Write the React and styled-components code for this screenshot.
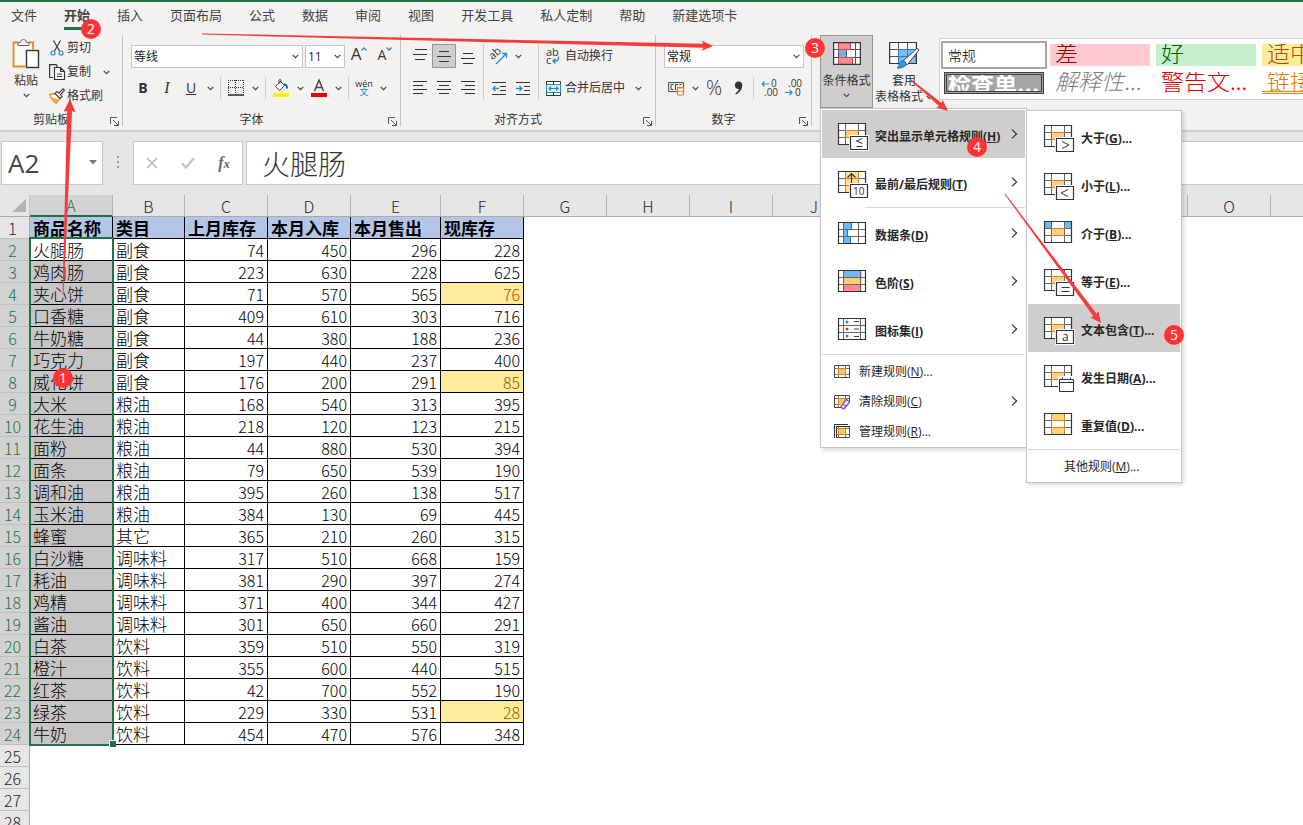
import React, { useState } from "react"
import styled, { createGlobalStyle, css } from "styled-components"

const tabs = ["文件", "开始", "插入", "页面布局", "公式", "数据", "审阅", "视图", "开发工具", "私人定制", "帮助", "新建选项卡"]

const columns = [
  { name: "A", width: 83 },
  { name: "B", width: 72 },
  { name: "C", width: 83 },
  { name: "D", width: 83 },
  { name: "E", width: 90 },
  { name: "F", width: 83 },
  { name: "G", width: 83 },
  { name: "H", width: 83 },
  { name: "I", width: 83 },
  { name: "J", width: 83 },
  { name: "K", width: 83 },
  { name: "L", width: 83 },
  { name: "M", width: 83 },
  { name: "N", width: 83 },
  { name: "O", width: 83 },
  { name: "P", width: 83 },
]

const heads = ["商品名称", "类目", "上月库存", "本月入库", "本月售出", "现库存"]

const stock = [
  ["火腿肠", "副食", 74, 450, 296, 228],
  ["鸡肉肠", "副食", 223, 630, 228, 625],
  ["夹心饼", "副食", 71, 570, 565, 76],
  ["口香糖", "副食", 409, 610, 303, 716],
  ["牛奶糖", "副食", 44, 380, 188, 236],
  ["巧克力", "副食", 197, 440, 237, 400],
  ["威化饼", "副食", 176, 200, 291, 85],
  ["大米", "粮油", 168, 540, 313, 395],
  ["花生油", "粮油", 218, 120, 123, 215],
  ["面粉", "粮油", 44, 880, 530, 394],
  ["面条", "粮油", 79, 650, 539, 190],
  ["调和油", "粮油", 395, 260, 138, 517],
  ["玉米油", "粮油", 384, 130, 69, 445],
  ["蜂蜜", "其它", 365, 210, 260, 315],
  ["白沙糖", "调味料", 317, 510, 668, 159],
  ["耗油", "调味料", 381, 290, 397, 274],
  ["鸡精", "调味料", 371, 400, 344, 427],
  ["酱油", "调味料", 301, 650, 660, 291],
  ["白茶", "饮料", 359, 510, 550, 319],
  ["橙汁", "饮料", 355, 600, 440, 515],
  ["红茶", "饮料", 42, 700, 552, 190],
  ["绿茶", "饮料", 229, 330, 531, 28],
  ["牛奶", "饮料", 454, 470, 576, 348],
]

const emptyRows = [25, 26, 27, 28]
const ROW = 22
const GUTTER = 30

const styleCells = [
  { text: "常规", kind: "normal" },
  { text: "差", kind: "bad" },
  { text: "好", kind: "good" },
  { text: "适中", kind: "neutral" },
  { text: "检查单...", kind: "check" },
  { text: "解释性...", kind: "explain" },
  { text: "警告文...", kind: "warn" },
  { text: "链接单...", kind: "link" },
]

/* ---------- icons ---------- */

const Chevron = () => (
  <svg width="7" height="5" viewBox="0 0 7 5" fill="none" stroke="#444" strokeWidth="1.2">
    <path d="M0.7 0.8 3.5 3.6 6.3 0.8" />
  </svg>
)

const ChevronRight = () => (
  <svg width="7" height="10" viewBox="0 0 7 10" fill="none" stroke="#333" strokeWidth="1.2">
    <path d="M1 0.6 5.6 5 1 9.4" />
  </svg>
)

const PasteIcon = () => (
  <svg width="28" height="30" viewBox="0 0 28 30" fill="none">
    <path d="M6 3.500H1.500v24H13V11h8V3.500h-3" fill="#FBFAF8" />
    <path d="M6 3.500H1.500v24H13M17 3.500h4v7" stroke="#E98B1B" strokeWidth="1.800" />
    <path d="M6 6.500V3.500h2.500a3 3 0 0 1 6 0H17v3z" fill="#fff" stroke="#666" />
    <rect x="14.500" y="11.500" width="12" height="17" fill="#fff" stroke="#333" strokeWidth="1.400" />
  </svg>
)

const CutIcon = () => (
  <svg width="14" height="16" viewBox="0 0 14 16" fill="none">
    <path d="M3.500 0.500 9.500 11M10.500 0.500 4.500 11" stroke="#444" strokeWidth="1.300" />
    <circle cx="3" cy="13" r="2" stroke="#2B88C8" strokeWidth="1.200" />
    <circle cx="11" cy="13" r="2" stroke="#2B88C8" strokeWidth="1.200" />
  </svg>
)

const CopyIcon = () => (
  <svg width="16" height="16" viewBox="0 0 16 16" fill="none" stroke="#333" strokeWidth="1.200">
    <path d="M4 13.500H0.600V0.600H7l1 1V3" />
    <path d="M5.500 3.500h6l4 4v8h-10zM11.500 3.500v4h4M8 10h5M8 12.500h5" fill="#fff" />
  </svg>
)

const BrushIcon = () => (
  <svg width="16" height="16" viewBox="0 0 16 16" fill="none">
    <path d="M0.800 6.500 6 5.500 11 10.500 7.500 15.200Q3 13 0.800 6.500z" fill="#fff" stroke="#E98B1B" strokeWidth="1.300" />
    <path d="M3 9 10 12 7 15.500Q4 13 3 9z" fill="#F2A94E" />
    <path d="M6 5.500 8 3.500l2 1.500L14 0.800l1.400 1.400L11.500 6.500l1.500 2-2 2z" fill="#fff" stroke="#444" strokeWidth="1.200" />
  </svg>
)

const LauncherIcon = () => (
  <svg width="9" height="9" viewBox="0 0 9 9" fill="none" stroke="#555">
    <path d="M0.500 7V0.500H7M3 3l5 5M8.500 4v4.500H4" />
  </svg>
)

const SizeMark = ({ down }) => (
  <svg width="6" height="4" viewBox="0 0 6 4" fill="none" stroke="#2B88C8" strokeWidth="1.300">
    <path d={down ? "M0.500 0.500 3 3 5.500 0.500" : "M0.500 3.500 3 1 5.500 3.500"} />
  </svg>
)

const BordersIcon = () => (
  <svg width="16" height="16" viewBox="0 0 16 16" fill="none" stroke="#333">
    <path d="M0.500 0v14M15.500 0v14M0 0.500h16M7.500 0v14M0 7.500h16" strokeDasharray="1 1" />
    <path d="M0 15h16" strokeWidth="1.600" />
  </svg>
)

const FillIcon = () => (
  <svg width="16" height="18" viewBox="0 0 16 18" fill="none">
    <path d="M7.500 2 2.500 7.500 6.500 11.500 11.500 6.500 7 2M6 5V1.500Q6 0.500 7 0.500T8 1.500V4" fill="#fff" stroke="#444" />
    <path d="M11 5.500Q14 5 14 9.500" stroke="#1C5BA8" strokeWidth="2" />
    <path d="M0 14h16v4H0z" fill="#FFF200" />
  </svg>
)

const FontColorIcon = () => (
  <svg width="16" height="18" viewBox="0 0 16 18" fill="none">
    <path d="M3.500 12 8 1l4.500 11M5 8.500h6" stroke="#444" strokeWidth="1.400" />
    <path d="M0 14h16v4H0z" fill="#E3000F" />
  </svg>
)

const lineSets = {
  top: ["M2 1.500h12", "M0 6.500h14", "M2 11.500h10"],
  middle: ["M2 3.500h10", "M0 8.500h14", "M2 13.500h10"],
  bottom: ["M2 5.500h10", "M0 10.500h14", "M2 15.500h10"],
  left: ["M0 1.500h14", "M0 5.500h10", "M0 9.500h14", "M0 13.500h10"],
  center: ["M0 1.500h14", "M2 5.500h10", "M0 9.500h14", "M2 13.500h10"],
  right: ["M0 1.500h14", "M4 5.500h10", "M0 9.500h14", "M4 13.500h10"],
}

const LinesIcon = ({ kind }) => (
  <svg width="14" height="16" viewBox="0 0 14 16" stroke="#333" strokeWidth="1.200">
    <path d={lineSets[kind].join("")} />
  </svg>
)

const IndentIcon = ({ out }) => (
  <svg width="14" height="14" viewBox="0 0 14 14" fill="none">
    <path d="M0 1.500h14M8 5.500h6M8 9.500h6M0 13.500h14" stroke="#333" strokeWidth="1.200" />
    <path d={out ? "M7 7.500H1M3.500 5 1 7.500l2.500 2.500" : "M0 7.500h6M3.500 5 6 7.500 3.500 10"} stroke="#2B88D8" strokeWidth="1.300" />
  </svg>
)

const OrientationIcon = () => (
  <svg width="17" height="17" viewBox="0 0 17 17" fill="none">
    <text x="1" y="11" fontSize="11" fill="#333" transform="rotate(-42 3 11)">ab</text>
    <path d="M5 16 15 6M11 5.500h4.500V10" stroke="#2B88C8" strokeWidth="1.300" />
  </svg>
)

const WrapIcon = () => (
  <svg width="15" height="17" viewBox="0 0 15 17" fill="none">
    <text x="0" y="8" fontSize="11" fill="#333">ab</text>
    <text x="0" y="16" fontSize="11" fill="#333">c</text>
    <path d="M12.500 8.500v1.500Q12.500 13 9.500 13H7M9.500 10.500 7 13l2.500 2.500" stroke="#2B88C8" strokeWidth="1.300" />
  </svg>
)

const MergeIcon = () => (
  <svg width="15" height="15" viewBox="0 0 15 15" fill="none" stroke="#333">
    <path d="M0.500 0.500h14v14H0.500zM7.500 0.500V4M7.500 11v3.500" fill="#fff" />
    <path d="M0.500 3.500h14v8H0.500z" fill="#E3F1FB" stroke="#2B88C8" />
    <path d="M3 7.500h9M5 5.500l-2 2 2 2M10 5.500l2 2-2 2" stroke="#2B88C8" strokeWidth="1.200" />
  </svg>
)

const CurrencyIcon = () => (
  <svg width="17" height="15" viewBox="0 0 17 15" fill="none">
    <path d="M0.600 1.600h15v9H0.600z" stroke="#444" />
    <path d="M5.500 3.500H3v5h2.500M7.500 9V3.500h2.500M11.500 3.500h2" stroke="#444" />
    <path d="M9.500 6.500h6v7q-3 1.500-6 0z" fill="#fff" stroke="#E9801B" strokeWidth="1.200" />
    <path d="M9.500 6.500q3 1.500 6 0M9.500 10q3 1.500 6 0" stroke="#E9801B" />
  </svg>
)

const DecimalIcon = ({ more }) => (
  <svg width="16" height="17" viewBox="0 0 16 17" fill="none">
    <text x={more ? 10 : 3} y="7" fontSize="10" fill="#333">{more ? "0" : ".00"}</text>
    <text x={more ? 3 : 10} y="16" fontSize="10" fill="#333">{more ? ".00" : "0"}</text>
    <path d={more ? "M8 4H1M3.500 1.500 1 4l2.500 2.500" : "M0 12.500h7M4.500 10 7 12.500 4.500 15"} stroke="#2B88C8" strokeWidth="1.200" />
  </svg>
)

const CommaIcon = () => (
  <svg width="9" height="14" viewBox="0 0 9 14" fill="#333">
    <path d="M4.300 0.500a3.600 3.600 0 0 1 4 3.800Q8.300 10 2 13.500L1.300 12.500Q4.500 10.500 5 8A3.700 3.700 0 1 1 4.300 0.500z" />
  </svg>
)

const CondIcon = () => (
  <svg width="28" height="23" viewBox="0 0 28 23" fill="none">
    <path d="M0.500 0.500h27v22H0.500z" fill="#fff" />
    <path d="M5 8h8v7H5z" fill="#6FB3F0" />
    <path d="M0 7.500h28M0 15.500h28M5.500 0v22M13.500 0v22M22.500 0v22" stroke="#555" />
    <path d="M5.500 0.500h12v7h-12zM5.500 15.500h14v7h-14z" fill="#FF8C8C" stroke="#E0494D" />
    <path d="M0.600 0.600h26.800v21.800H0.600z" stroke="#333" strokeWidth="1.200" />
  </svg>
)

const TableFormatIcon = () => (
  <svg width="31" height="28" viewBox="0 0 31 28" fill="none">
    <path d="M0.500 1.500h27v21H0.500z" fill="#fff" />
    <path d="M9 8.500h18.500v14H9z" fill="#7DBBEF" />
    <path d="M0 8.500h28M0 15.500h28M9.500 1v22M18.500 1v22" stroke="#555" />
    <path d="M9.500 8.500h18M9.500 15.500h18M9.500 8v14M18.500 8v14" stroke="#2B7CC0" />
    <path d="M0.600 1.500h26.800v21H0.600z" stroke="#333" strokeWidth="1.200" />
    <path d="M14 20 27.500 8q2-1 2.500 1L18 24z" fill="#fff" stroke="#444" />
    <path d="M13 19.500q4 0 4.500 4-3 4-9.500 3.500 3-1.500 2-4z" fill="#3A96DD" stroke="#1C6FB0" />
  </svg>
)

const marks = {
  le: <path d="M24.500 15.500 18.500 18l6 2.500M18.500 23.500h6" />,
  gt: <path d="M18 16.500l7 3.500-7 3.500" />,
  lt: <path d="M24 16.500l-7 3.500 7 3.500" />,
  eq: <path d="M17.500 18.500h8M17.500 22.500h8" />,
}

/* worksheet grid with a coloured part and a small tile in the corner */
const RuleIcon = ({ kind }) => {
  const tile = ["le", "gt", "lt", "eq", "ten", "a"].includes(kind)
  const plain = !["scale", "icons", "bars"].includes(kind)
  return (
    <svg width="30" height="22" viewBox="0 0 30 22" fill="none">
      <path d="M0.500 0.500h27v21H0.500z" fill="#fff" />
      {plain && kind !== "dup" && <path d="M7.500 7.500h13v7h-13z" fill="#FFD27F" />}
      {kind === "ten" && <path d="M7.500 0.500h13v21h-13z" fill="#FFDE9E" />}
      {kind === "dup" && <path d="M7.500 0.500h13v7h-13zM7.500 14.500h13v7h-13z" fill="#FFD27F" />}
      {kind === "between" && <path d="M0.500 0.500h7v7h-7zM20.500 0.500h7v7h-7z" fill="#6DB9F2" />}
      {kind === "scale" && (
        <>
          <path d="M5.500 0.500h18v7h-18z" fill="#78B7EE" />
          <path d="M5.500 7.500h18v7h-18z" fill="#FFCF70" />
          <path d="M5.500 14.500h18v7h-18z" fill="#FF8A8A" />
        </>
      )}
      {kind === "scale" || kind === "icons" ? (
        <path d="M5.500 0v22M22.500 0v22M0 7.500h28M0 14.500h28" stroke="#666" />
      ) : (
        <path d="M7.500 0v22M20.500 0v22M0 7.500h28M0 14.500h28" stroke="#666" />
      )}
      {plain && <path d="M7 7.500h14M7 14.500h14" stroke="#D9822B" />}
      {(kind === "ten" || kind === "dup") && <path d="M7.500 0v22M20.500 0v22" stroke="#D9822B" />}
      {kind === "bars" && (
        <>
          <path d="M5.500 0.500h8v7h-4v7h3v7h-7z" fill="#6DB9F2" stroke="#2178BE" />
          <path d="M6 7.500h4M6 14.500h4" stroke="#2178BE" />
        </>
      )}
      {kind === "icons" && (
        <>
          <path d="M16 3.500h5M16 11h5M16 18.500h5" stroke="#444" />
          <circle cx="9" cy="4" r="1.500" fill="#2B88A8" />
          <circle cx="9" cy="11" r="1.500" fill="#D13438" />
          <circle cx="9" cy="18" r="1.500" fill="#2B88A8" />
        </>
      )}
      <path d="M0.500 0.500h27v21H0.500z" stroke="#333" strokeWidth="1.200" />
      {tile && (
        <>
          <path d="M11 12h20v16H11z" fill="#fff" />
          <path d="M12.500 13.500h17v13h-17z" fill="#fff" stroke="#333" strokeWidth="1.200" />
          <g stroke="#333">{marks[kind]}</g>
        </>
      )}
      {kind === "ten" && (
        <>
          <path d="M13.500 12V2.500M9.500 6.500l4-4 4 4" stroke="#333" strokeWidth="1.200" />
          <text x="15" y="24" fontSize="10" fontWeight="400" fill="#333">10</text>
        </>
      )}
      {kind === "a" && <text x="18" y="24" fontSize="12" fontWeight="400" fill="#333">a</text>}
      {kind === "date" && (
        <>
          <path d="M14 11h16v17H14z" fill="#fff" />
          <path d="M15.500 14.500h14v12h-14zM15.500 17.500h14M18.500 12.500v2M26.500 12.500v2" stroke="#333" />
        </>
      )}
    </svg>
  )
}

const SmallRuleIcon = ({ kind }) => (
  <svg width="16" height="15" viewBox="0 0 16 15" fill="none">
    <path d="M0.500 1.500h15v12h-15z" fill="#fff" />
    <path d="M4.500 4.500h7v6h-7z" fill="#FFC766" />
    <path d="M4.500 1v13M11.500 1v13M0 4.500h16M0 10.500h16" stroke="#777" />
    <path d="M4 4.500h8M4 10.500h8M4.500 4v7M11.500 4v7" stroke="#D9822B" />
    <path d="M0.500 1.500h15v12h-15z" stroke="#444" />
    {kind === "clear" && (
      <>
        <path d="M7 9h9v6H7z" fill="#fff" />
        <path d="M7 12.500 12.500 5.500l3 2.500-5 6.500H8.500zM9 10l3 2.500" fill="#fff" stroke="#8E4BB5" strokeWidth="1.300" />
      </>
    )}
    {kind === "manage" && (
      <>
        <path d="M0 0h16v2.500H2.500V15H0z" fill="#fff" />
        <path d="M0.500 14V0.500H14M2.500 14V2.500H16" stroke="#333" />
      </>
    )}
  </svg>
)

const Arrow = ({ from, to, width, head }) => {
  const [x1, y1] = from
  const [x2, y2] = to
  const length = Math.hypot(x2 - x1, y2 - y1)
  const ux = (x2 - x1) / length
  const uy = (y2 - y1) / length
  const at = (along, side) => `${x1 + ux * along - uy * side},${y1 + uy * along + ux * side}`
  const neck = length - head
  const points = [
    at(0, -0.5), at(neck, -width / 2), at(neck - 1, -head / 2), at(length, 0),
    at(neck - 1, head / 2), at(neck, width / 2), at(0, 0.5),
  ]
  return <polygon points={points.join(" ")} fill="#F53B3B" />
}

/* ---------- menus ---------- */

const MenuLabel = ({ text, accel, dots }) => (
  <span>{text}(<u>{accel}</u>){dots && "..."}</span>
)

const CompareMenu = () => (
  <SubMenu role="menu">
    <MenuItem role="menuitem"><RuleIcon kind="gt" /><MenuLabel text="大于" accel="G" dots /></MenuItem>
    <MenuItem role="menuitem"><RuleIcon kind="lt" /><MenuLabel text="小于" accel="L" dots /></MenuItem>
    <MenuItem role="menuitem"><RuleIcon kind="between" /><MenuLabel text="介于" accel="B" dots /></MenuItem>
    <MenuItem role="menuitem"><RuleIcon kind="eq" /><MenuLabel text="等于" accel="E" dots /></MenuItem>
    <MenuItem role="menuitem" $active><RuleIcon kind="a" /><MenuLabel text="文本包含" accel="T" dots /></MenuItem>
    <MenuItem role="menuitem"><RuleIcon kind="date" /><MenuLabel text="发生日期" accel="A" dots /></MenuItem>
    <MenuItem role="menuitem"><RuleIcon kind="dup" /><MenuLabel text="重复值" accel="D" dots /></MenuItem>
    <MenuLine />
    <SmallItem role="menuitem" $noIcon><MenuLabel text="其他规则" accel="M" dots /></SmallItem>
  </SubMenu>
)

const RulesMenu = () => (
  <Menu role="menu">
    <MenuItem role="menuitem" $active>
      <RuleIcon kind="le" /><MenuLabel text="突出显示单元格规则" accel="H" /><ChevronRight />
    </MenuItem>
    <MenuItem role="menuitem"><RuleIcon kind="ten" /><MenuLabel text="最前/最后规则" accel="T" /><ChevronRight /></MenuItem>
    <MenuLine $inset />
    <MenuItem role="menuitem"><RuleIcon kind="bars" /><MenuLabel text="数据条" accel="D" /><ChevronRight /></MenuItem>
    <MenuItem role="menuitem"><RuleIcon kind="scale" /><MenuLabel text="色阶" accel="S" /><ChevronRight /></MenuItem>
    <MenuItem role="menuitem"><RuleIcon kind="icons" /><MenuLabel text="图标集" accel="I" /><ChevronRight /></MenuItem>
    <MenuLine />
    <SmallItem role="menuitem"><SmallRuleIcon /><MenuLabel text="新建规则" accel="N" dots /></SmallItem>
    <SmallItem role="menuitem"><SmallRuleIcon kind="clear" /><MenuLabel text="清除规则" accel="C" /><ChevronRight /></SmallItem>
    <SmallItem role="menuitem"><SmallRuleIcon kind="manage" /><MenuLabel text="管理规则" accel="R" dots /></SmallItem>
    <CompareMenu />
  </Menu>
)

/* ---------- ribbon ---------- */

const GroupFooter = ({ label }) => (
  <Footer>
    <span>{label}</span>
    <Launcher aria-label={`${label}设置`}><LauncherIcon /></Launcher>
  </Footer>
)

const Picker = ({ label, value, width }) => (
  <PickerBox $width={width}>
    <select aria-label={label} defaultValue={value}>
      <option>{value}</option>
    </select>
    <Chevron />
  </PickerBox>
)

function Ribbon() {
  return (
    <RibbonBar>
      <Group $width={123}>
        <Clipboard>
          <PasteButton>
            <PasteIcon />
            <span>粘贴</span>
            <Chevron />
          </PasteButton>
          <Stack>
            <RowButton><CutIcon />剪切</RowButton>
            <CopyRow>
              <RowButton><CopyIcon />复制</RowButton>
              <DropButton aria-label="复制选项"><Chevron /></DropButton>
            </CopyRow>
            <RowButton><BrushIcon />格式刷</RowButton>
          </Stack>
        </Clipboard>
        <GroupFooter label="剪贴板" />
      </Group>

      <Group $width={278}>
        <Tools $left={8}>
          <Line>
            <Picker label="字体" value="等线" width={172} />
            <Picker label="字号" value="11" width={40} />
            <GrowButton aria-label="增大字号">A<SizeMark /></GrowButton>
            <GrowButton aria-label="减小字号" $small>A<SizeMark down /></GrowButton>
          </Line>
          <Line $gap={0}>
            <Tool aria-label="加粗"><b>B</b></Tool>
            <Tool aria-label="倾斜"><i>I</i></Tool>
            <Tool aria-label="下划线"><u>U</u></Tool>
            <DropButton aria-label="下划线选项"><Chevron /></DropButton>
            <Divider $short />
            <Tool aria-label="边框"><BordersIcon /></Tool>
            <DropButton aria-label="边框选项"><Chevron /></DropButton>
            <Divider $short />
            <Tool aria-label="填充颜色"><FillIcon /></Tool>
            <DropButton aria-label="填充颜色选项"><Chevron /></DropButton>
            <Tool aria-label="字体颜色"><FontColorIcon /></Tool>
            <DropButton aria-label="字体颜色选项"><Chevron /></DropButton>
            <Divider $short />
            <Tool aria-label="拼音"><Pinyin>wén<em>文</em></Pinyin></Tool>
            <DropButton aria-label="拼音选项"><Chevron /></DropButton>
          </Line>
        </Tools>
        <GroupFooter label="字体" />
      </Group>

      <Group $width={255}>
        <AlignTools>
          <Tools>
            <Line $gap={0}>
              <Tool aria-label="顶端对齐"><LinesIcon kind="top" /></Tool>
              <Tool aria-label="垂直居中" $pressed><LinesIcon kind="middle" /></Tool>
              <Tool aria-label="底端对齐"><LinesIcon kind="bottom" /></Tool>
            </Line>
            <Line $gap={0}>
              <Tool aria-label="左对齐"><LinesIcon kind="left" /></Tool>
              <Tool aria-label="居中"><LinesIcon kind="center" /></Tool>
              <Tool aria-label="右对齐"><LinesIcon kind="right" /></Tool>
            </Line>
          </Tools>
          <Divider />
          <Tools>
            <Line $gap={0}>
              <Tool aria-label="方向"><OrientationIcon /></Tool>
              <DropButton aria-label="方向选项"><Chevron /></DropButton>
            </Line>
            <Line $gap={0}>
              <Tool aria-label="减少缩进量"><IndentIcon out /></Tool>
              <Tool aria-label="增加缩进量"><IndentIcon /></Tool>
            </Line>
          </Tools>
          <Divider />
          <Tools $left={4}>
            <Line><RowButton><WrapIcon />自动换行</RowButton></Line>
            <Line $gap={6}>
              <RowButton><MergeIcon />合并后居中</RowButton>
              <DropButton aria-label="合并选项"><Chevron /></DropButton>
            </Line>
          </Tools>
        </AlignTools>
        <GroupFooter label="对齐方式" />
      </Group>

      <Group $width={156}>
        <Tools $left={8}>
          <Line><Picker label="数字格式" value="常规" width={140} /></Line>
          <Line $gap={0}>
            <Tool aria-label="会计数字格式"><CurrencyIcon /></Tool>
            <DropButton aria-label="货币选项"><Chevron /></DropButton>
            <Tool aria-label="百分比样式"><Percent>%</Percent></Tool>
            <Tool aria-label="千位分隔样式"><CommaIcon /></Tool>
            <Divider $short />
            <Tool aria-label="增加小数位数"><DecimalIcon more /></Tool>
            <Tool aria-label="减少小数位数"><DecimalIcon /></Tool>
          </Line>
        </Tools>
        <GroupFooter label="数字" />
      </Group>

      <StylesGroup>
        <MenuAnchor>
          <BigButton $pressed>
            <CondIcon />
            <span>条件格式</span>
            <Chevron />
          </BigButton>
          <RulesMenu />
        </MenuAnchor>
        <BigButton $wide>
          <TableFormatIcon />
          <span>套用</span>
          <span>表格格式 <Chevron /></span>
        </BigButton>
        <Gallery>
          {styleCells.map((cell) => (
            <StyleCell key={cell.text} $kind={cell.kind}>{cell.text}</StyleCell>
          ))}
        </Gallery>
      </StylesGroup>
    </RibbonBar>
  )
}

function FormulaBar() {
  const [formula, setFormula] = useState("火腿肠")

  return (
    <FormulaRow>
      <NameBox>
        <input aria-label="名称框" defaultValue="A2" />
        <svg width="8" height="5" viewBox="0 0 8 5" fill="#777"><path d="M0 0h8L4 4.500z" /></svg>
      </NameBox>
      <svg width="3" height="13" viewBox="0 0 3 13" fill="#999"><path d="M0 0h2v2H0zM0 5h2v2H0zM0 10h2v2H0z" /></svg>
      <FormulaButtons>
        <button aria-label="取消">
          <svg width="12" height="12" viewBox="0 0 12 12" stroke="#C4C4C4" strokeWidth="1.800"><path d="M1 1l10 10M11 1 1 11" /></svg>
        </button>
        <button aria-label="输入">
          <svg width="14" height="12" viewBox="0 0 14 12" fill="none" stroke="#C4C4C4" strokeWidth="2.400"><path d="M1 6.500 5 10.500 13 1" /></svg>
        </button>
        <button aria-label="插入函数"><Fx>f<sub>x</sub></Fx></button>
      </FormulaButtons>
      <FormulaInput aria-label="编辑栏" value={formula} onChange={(e) => setFormula(e.target.value)} />
    </FormulaRow>
  )
}

function Sheet() {
  const blanks = columns.slice(heads.length)

  return (
    <SheetArea>
      <Grid>
        <colgroup>
          <Col $width={GUTTER} />
          {columns.map((col) => <Col key={col.name} $width={col.width} />)}
        </colgroup>
        <thead>
          <tr>
            <Corner><svg width="14" height="13" viewBox="0 0 14 13" fill="#B4B4B4"><path d="M14 0v13H0z" /></svg></Corner>
            {columns.map((col) => (
              <ColHead key={col.name} scope="col" $active={col.name === "A"}>{col.name}</ColHead>
            ))}
          </tr>
        </thead>
        <tbody>
          <tr>
            <RowHead scope="row">1</RowHead>
            {heads.map((text) => <TitleCell key={text}>{text}</TitleCell>)}
            {blanks.map((col) => <Blank key={col.name} />)}
          </tr>
          {stock.map((row, r) => (
            <tr key={row[0]}>
              <RowHead scope="row" $active>{r + 2}</RowHead>
              {row.map((value, c) => (
                <Cell
                  key={c}
                  $number={c > 1}
                  $selected={c === 0 && r > 0}
                  $low={c === 5 && value < 100}
                >
                  {value}
                  {c === 0 && r === 0 && <Selection $rows={stock.length} />}
                </Cell>
              ))}
              {blanks.map((col) => <Blank key={col.name} />)}
            </tr>
          ))}
          {emptyRows.map((n) => (
            <tr key={n}>
              <RowHead scope="row">{n}</RowHead>
              {columns.map((col) => <Blank key={col.name} />)}
            </tr>
          ))}
        </tbody>
      </Grid>
    </SheetArea>
  )
}

const steps = [
  { n: 1, x: 63, y: 378 },
  { n: 2, x: 91, y: 29 },
  { n: 3, x: 815, y: 48 },
  { n: 4, x: 977, y: 147 },
  { n: 5, x: 1174, y: 335 },
]

const Notes = () => (
  <NotesLayer>
    <Arrow from={[63, 295]} to={[70, 99]} width={5} head={12} />
    <Arrow from={[202, 34]} to={[713, 46]} width={4} head={10} />
    <Arrow from={[911, 80]} to={[948, 111]} width={4} head={10} />
    <Arrow from={[1005, 194]} to={[1101, 323]} width={4} head={10} />
    {steps.map((step) => (
      <g key={step.n}>
        <circle cx={step.x} cy={step.y} r="10" fill="#FF3333" />
        <text x={step.x} y={step.y + 5} textAnchor="middle" fontSize="14" fill="#fff">{step.n}</text>
      </g>
    ))}
  </NotesLayer>
)

export default function App() {
  const [current, setCurrent] = useState("开始")

  return (
    <Window>
      <GlobalStyle />
      <TabBar>
        {tabs.map((tab) => (
          <Tab key={tab} $active={tab === current} onClick={() => setCurrent(tab)}>{tab}</Tab>
        ))}
      </TabBar>
      <Ribbon />
      <FormulaBar />
      <Sheet />
      <Notes />
    </Window>
  )
}

const GlobalStyle = createGlobalStyle`
  * {
    box-sizing: border-box;
  }

  body {
    margin: 0;
    overflow: hidden;
  }

  button, input, select {
    font: inherit;
    color: inherit;
    background: none;
    border: none;
    padding: 0;
    margin: 0;
  }

  svg {
    flex: none;
    display: block;
    overflow: visible;
  }
`

const Window = styled.div`
  position: relative;
  display: flex;
  flex-direction: column;
  height: 100vh;
  overflow: hidden;
  font-family: "Open Sans", "Noto Sans CJK SC", sans-serif;
  font-size: 12px;
  color: #333;
  background: #fff;
`

const TabBar = styled.nav`
  display: flex;
  flex: none;
  gap: 27px;
  height: 32px;
  padding: 0 11px;
  border-top: 2px solid #217346;
  background: #f3f2f1;
`

const Tab = styled.button`
  height: 28px;
  font-size: 13px;
  line-height: 26px;
  white-space: nowrap;
  color: #444;
  border-bottom: 3px solid transparent;

  ${(p) => p.$active && css`
    font-weight: 700;
    border-color: #217346;
  `}
`

const RibbonBar = styled.div`
  display: flex;
  flex: none;
  height: 98px;
  padding: 3px 0 4px;
  background: #f3f2f1;
`

const Group = styled.section`
  display: flex;
  flex-direction: column;
  justify-content: space-between;
  flex: none;
  width: ${(p) => p.$width}px;
  border-right: 1px solid #c4c2c0;
`

const Footer = styled.div`
  position: relative;
  height: 16px;
  line-height: 20px;
  text-align: center;
  padding-right: 20px;
`

const Launcher = styled.button`
  position: absolute;
  right: 3px;
  bottom: 0;
`

const Clipboard = styled.div`
  display: flex;
  gap: 6px;
  height: 74px;
  padding: 1px 0 0 12px;
`

const PasteButton = styled.button`
  display: flex;
  flex-direction: column;
  align-items: center;
  gap: 5px;
  padding-top: 3px;
  line-height: 14px;
`

const Stack = styled.div`
  display: flex;
  flex-direction: column;
  padding-left: 3px;
`

const RowButton = styled.button`
  display: flex;
  align-items: center;
  gap: 4px;
  height: 24px;
  line-height: 16px;
  white-space: nowrap;

  ${Stack} & {
    gap: 2px;
  }

  ${Stack} & > svg {
    width: 16px;
  }
`

const CopyRow = styled.div`
  display: flex;
  gap: 8px;
`

const DropButton = styled.button`
  display: flex;
  align-items: center;
  justify-content: center;
  width: 14px;
  height: 24px;
`

const Tools = styled.div`
  display: flex;
  flex-direction: column;
  gap: 8px;
  padding-top: 9px;
  padding-left: ${(p) => p.$left || 0}px;
`

const Line = styled.div`
  display: flex;
  align-items: center;
  gap: ${(p) => p.$gap ?? 2}px;
  height: 24px;
`

const AlignTools = styled.div`
  display: flex;
  padding-left: 7px;
`

const PickerBox = styled.div`
  display: flex;
  align-items: center;
  width: ${(p) => p.$width}px;
  height: 23px;
  padding-right: 3px;
  background: #fff;
  border: 1px solid #c8c6c4;

  select {
    flex: 1;
    min-width: 0;
    height: 21px;
    padding-left: 2px;
    appearance: none;
    outline: none;
    color: #222;
  }
`

const GrowButton = styled.button`
  display: flex;
  justify-content: center;
  width: 24px;
  height: 24px;
  font-size: ${(p) => (p.$small ? 14 : 17)}px;
  line-height: ${(p) => (p.$small ? 22 : 20)}px;

  svg {
    margin-top: 3px;
  }
`

const Tool = styled.button`
  display: flex;
  align-items: center;
  justify-content: center;
  width: 24px;
  height: 24px;
  font-size: 14px;
  line-height: 20px;

  i {
    font-family: "Liberation Serif", serif;
    font-size: 16px;
  }

  ${(p) => p.$pressed && css`
    background: #d0cecd;
    border: 1px solid #979593;
  `}
`

const Pinyin = styled.span`
  display: flex;
  flex-direction: column;
  font-size: 9px;
  line-height: 8px;

  em {
    font-style: normal;
    color: #2b88c8;
  }
`

const Percent = styled.span`
  font-size: 20px;
  font-weight: 300;
`

const Divider = styled.span`
  flex: none;
  width: 1px;
  margin: ${(p) => (p.$short ? "0 3px" : "9px 3px 0")};
  height: ${(p) => (p.$short ? "22px" : "56px")};
  background: #cfcdcb;
`

const StylesGroup = styled.section`
  display: flex;
  align-items: flex-start;
  flex: 1;
  min-width: 0;
  padding-left: 8px;
`

const MenuAnchor = styled.div`
  position: relative;
`

const BigButton = styled.button`
  display: flex;
  flex-direction: column;
  align-items: center;
  gap: ${(p) => (p.$wide ? 1 : 5)}px;
  width: ${(p) => (p.$wide ? 62 : 53)}px;
  height: 73px;
  padding-top: 6px;
  line-height: 15px;
  white-space: nowrap;

  span > svg {
    display: inline-block;
    vertical-align: middle;
  }

  & > svg:first-child {
    margin-bottom: 3px;
  }

  ${(p) => p.$pressed && css`
    background: #d0cecd;
    border: 1px solid #979593;
  `}
`

const Gallery = styled.div`
  display: grid;
  grid-template-columns: repeat(4, 106px);
  grid-template-rows: 28px 28px;
  align-items: center;
  flex: 1;
  min-width: 0;
  height: 62px;
  margin: 3px 0 0 4px;
  padding: 2px 1px;
  overflow: hidden;
  background: #fff;
  border: 1px solid #d2d0ce;
  border-right: none;
`

const cellKinds = {
  normal: css`
    width: 106px;
    height: 28px;
    margin: 0;
    padding-bottom: 0;
    line-height: 24px;
    font-size: 14px;
    border: 2px solid #a6a6a6;
  `,
  bad: css`
    color: #9c0006;
    background: #ffc7ce;
  `,
  good: css`
    color: #006100;
    background: #c6efce;
  `,
  neutral: css`
    color: #9c5700;
    background: #ffeb9c;
  `,
  check: css`
    padding-left: 1px;
    font-weight: 700;
    color: #fff;
    background: #a5a5a5;
    border: 3px double #3f3f3f;
  `,
  explain: css`
    font-style: italic;
    color: #7f7f7f;
  `,
  warn: css`
    color: #e00000;
  `,
  link: css`
    color: #e07b00;
    border-bottom: 3px double #ff8001;
  `,
}

const StyleCell = styled.button`
  width: 100px;
  height: 22px;
  margin-left: 3px;
  padding: 0 0 6px 5px;
  overflow: hidden;
  font-family: "Noto Sans CJK SC", sans-serif;
  font-size: 23px;
  font-weight: 300;
  line-height: 16px;
  text-align: left;
  white-space: nowrap;
  color: #000;
  ${(p) => cellKinds[p.$kind]}
`

const menuBox = css`
  position: absolute;
  z-index: 5;
  padding: 1px;
  background: #fff;
  border: 1px solid #c6c6c6;
  box-shadow: 2px 2px 4px rgba(0, 0, 0, 0.15);
`

const Menu = styled.div`
  ${menuBox}
  top: 100%;
  left: 0;
  width: 207px;
`

const SubMenu = styled.div`
  ${menuBox}
  top: 1px;
  left: 100%;
  width: 156px;
`

const MenuItem = styled.button`
  display: flex;
  align-items: center;
  gap: 7px;
  width: 100%;
  height: 48px;
  padding: 0 7px 0 16px;
  font-weight: 700;
  white-space: nowrap;
  color: #262626;
  background: ${(p) => (p.$active ? "#d0cecd" : "#fff")};

  & > span {
    padding-top: 4px;
  }

  & > svg:last-child {
    margin-left: auto;
  }
`

const SmallItem = styled.button`
  display: flex;
  align-items: center;
  gap: 9px;
  width: 100%;
  height: 30px;
  padding: 0 7px 0 ${(p) => (p.$noIcon ? 36 : 12)}px;
  white-space: nowrap;
  color: #262626;

  & > span + svg {
    margin-left: auto;
  }
`

const MenuLine = styled.div`
  height: 1px;
  margin: 1px 0 1px ${(p) => (p.$inset ? 43 : 0)}px;
  background: #d8d8d8;
`

const FormulaRow = styled.div`
  display: flex;
  align-items: center;
  flex: none;
  height: 65px;
  padding: 9px 0 11px 1px;
  border-top: 2px solid #cfcfcf;
  background: #e6e6e6;
`

const box = css`
  height: 44px;
  background: #fff;
  border: 1px solid #c6c6c6;
`

const NameBox = styled.div`
  ${box}
  display: flex;
  align-items: center;
  width: 102px;
  margin-right: 14px;
  padding: 0 5px 0 6px;

  input {
    flex: 1;
    min-width: 0;
    font-size: 26px;
    line-height: 40px;
    outline: none;
    color: #444;
  }
`

const FormulaButtons = styled.div`
  ${box}
  display: grid;
  grid-template-columns: repeat(3, 36px);
  width: 110px;
  margin-left: 13px;

  button {
    display: flex;
    align-items: center;
    justify-content: center;
  }
`

const Fx = styled.span`
  font-family: "Liberation Serif", serif;
  font-size: 16px;
  font-style: italic;
  font-weight: 700;
  color: #666;

  sub {
    font-size: 12px;
    line-height: 0;
    vertical-align: baseline;
  }
`

const FormulaInput = styled.input`
  &&& {
    ${box}
    flex: 1;
    min-width: 0;
    margin-left: 3px;
    padding-left: 15px;
    border-right: none;
    font-family: "Noto Sans CJK SC", sans-serif;
    font-size: 28px;
    font-weight: 300;
    outline: none;
    color: #333;
  }
`

const SheetArea = styled.main`
  flex: 1;
  min-height: 0;
  overflow: hidden;
`

const Grid = styled.table`
  table-layout: fixed;
  width: ${columns.reduce((sum, col) => sum + col.width, GUTTER)}px;
  border-spacing: 0;
  font-family: "Noto Sans CJK SC", sans-serif;
  font-size: 16px;
  font-weight: 300;
  line-height: 20px;
  color: #000;

  th, td {
    height: ${ROW}px;
    padding: 0;
    white-space: nowrap;
  }
`

const Col = styled.col`
  width: ${(p) => p.$width}px;
`

const Corner = styled.td`
  background: #e6e6e6;
  border-right: 1px solid #c4c4c4;
  border-bottom: 1px solid #ababab;

  svg {
    margin-left: 12px;
  }
`

const ColHead = styled.th`
  font-weight: 300;
  color: #262626;
  background: #e6e6e6;
  border-right: 1px solid #b4b4b4;
  border-bottom: 1px solid #ababab;

  ${(p) => p.$active && css`
    line-height: 19px;
    color: #217346;
    background: #d2d2d2;
    border-bottom: 2px solid #217346;
  `}
`

const RowHead = styled.th`
  font-weight: 300;
  text-align: center;
  color: ${(p) => (p.$active ? "#217346" : "#262626")};
  background: ${(p) => (p.$active ? "#d2d2d2" : "#e6e6e6")};
  border-right: 1px solid #ababab;
  border-bottom: 1px solid #c0c0c0;

  &&& {
    padding-right: 4px;
  }
`

const Cell = styled.td`
  position: relative;
  font-size: ${(p) => (p.$number ? 16 : 17)}px;
  text-align: ${(p) => (p.$number ? "right" : "left")};
  color: ${(p) => (p.$low ? "#9c5700" : "#000")};
  background: ${(p) => (p.$selected ? "#c6c6c6" : p.$low ? "#ffeb9c" : "#fff")};
  border-right: 1px solid #000;
  border-bottom: 1px solid #000;

  &&& {
    padding: 0 3px;
  }
`

const TitleCell = styled(Cell)`
  font-weight: 700;
  background: #b4c6e7;
`

const Blank = styled.td`
  background: #fff;
`

const Selection = styled.span`
  position: absolute;
  z-index: 1;
  top: -2px;
  left: -1px;
  right: -2px;
  height: ${(p) => p.$rows * ROW + 3}px;
  border: 2px solid #217346;

  &::after {
    content: "";
    position: absolute;
    right: -4px;
    bottom: -3px;
    width: 6px;
    height: 6px;
    background: #217346;
    border: 1px solid #fff;
    border-width: 1px 0 0 1px;
  }
`

const NotesLayer = styled.svg`
  position: absolute;
  inset: 0;
  z-index: 10;
  width: 100%;
  height: 100%;
  pointer-events: none;
`
